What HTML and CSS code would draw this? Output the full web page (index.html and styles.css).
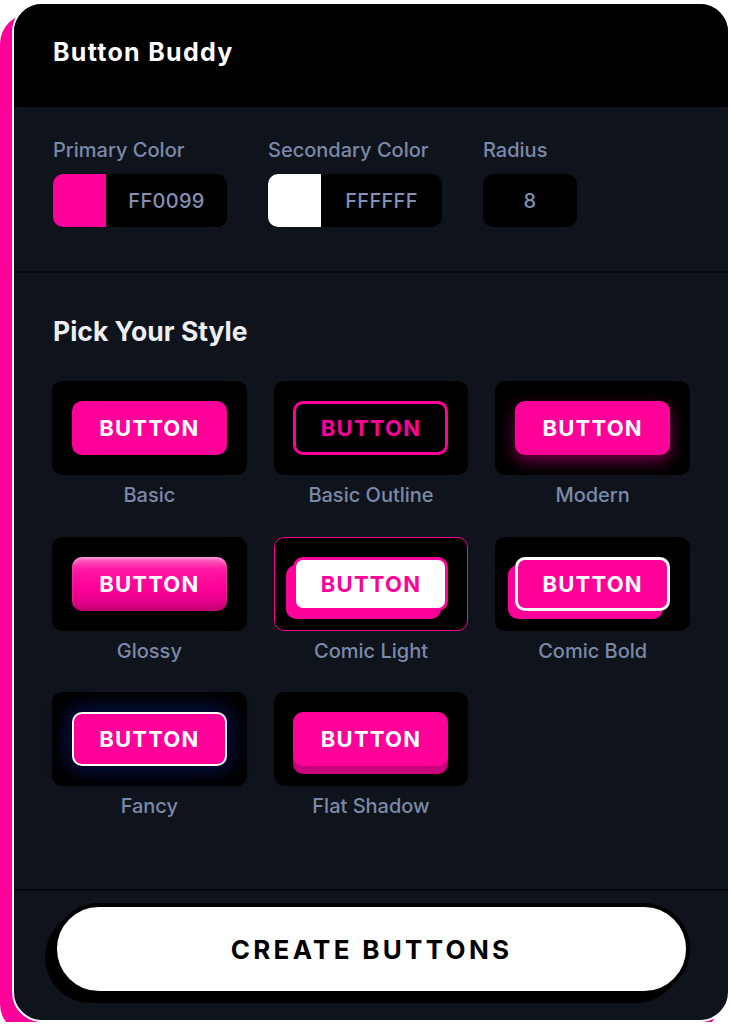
FILE: index.html
```html
<!DOCTYPE html>
<html lang="en">
<head>
<meta charset="utf-8">
<title>Button Buddy</title>
<link rel="stylesheet" href="styles.css">
</head>
<body>
<div class="page">
  <div class="card">
    <header class="header">
      <h1 class="title">Button Buddy</h1>
    </header>

    <section class="controls">
      <div class="field">
        <span class="label">Primary Color</span>
        <div class="color-input">
          <span class="swatch swatch-pink"></span>
          <span class="value">FF0099</span>
        </div>
      </div>
      <div class="field">
        <span class="label">Secondary Color</span>
        <div class="color-input">
          <span class="swatch swatch-white"></span>
          <span class="value">FFFFFF</span>
        </div>
      </div>
      <div class="field">
        <span class="label">Radius</span>
        <div class="radius-input">
          <span class="value">8</span>
        </div>
      </div>
    </section>

    <section class="styles">
      <h2 class="section-title">Pick Your Style</h2>
      <div class="style-grid">
        <div class="style-item">
          <div class="preview"><span class="btn btn-basic">BUTTON</span></div>
          <span class="style-name">Basic</span>
        </div>
        <div class="style-item">
          <div class="preview"><span class="btn btn-outline">BUTTON</span></div>
          <span class="style-name">Basic Outline</span>
        </div>
        <div class="style-item">
          <div class="preview"><span class="btn btn-modern">BUTTON</span></div>
          <span class="style-name">Modern</span>
        </div>
        <div class="style-item">
          <div class="preview"><span class="btn btn-glossy">BUTTON</span></div>
          <span class="style-name">Glossy</span>
        </div>
        <div class="style-item">
          <div class="preview preview-selected"><span class="btn btn-comic-light">BUTTON</span></div>
          <span class="style-name">Comic Light</span>
        </div>
        <div class="style-item">
          <div class="preview"><span class="btn btn-comic-bold">BUTTON</span></div>
          <span class="style-name">Comic Bold</span>
        </div>
        <div class="style-item">
          <div class="preview"><span class="btn btn-fancy">BUTTON</span></div>
          <span class="style-name">Fancy</span>
        </div>
        <div class="style-item">
          <div class="preview"><span class="btn btn-flat">BUTTON</span></div>
          <span class="style-name">Flat Shadow</span>
        </div>
      </div>
    </section>

    <footer class="footer">
      <button class="create" type="button">CREATE BUTTONS</button>
    </footer>
  </div>
</div>
</body>
</html>
```

FILE: styles.css
```css
* {
  box-sizing: border-box;
}

html, body {
  margin: 0;
  padding: 0;
  background: #ffffff;
}

body {
  font-family: Inter, "Noto Sans", "Liberation Sans", sans-serif;
  overflow: hidden;
}

.page {
  padding: 2px 0 0 12px;
}

.card {
  width: 718px;
  height: 1020px;
  background: #0f131b;
  border: 2px solid #ffffff;
  border-radius: 30px;
  box-shadow: -12px 12px 0 #ff0099;
  overflow: hidden;
  display: flex;
  flex-direction: column;
}

.header {
  background: #000000;
  height: 103px;
  padding: 33px 39px 0;
}

.title {
  margin: 0;
  font-size: 25px;
  line-height: 30px;
  font-weight: 700;
  color: #ffffff;
  letter-spacing: 1.3px;
}

.controls {
  display: flex;
  gap: 41px;
  padding: 31px 39px 44px;
  border-bottom: 2px solid #05070b;
}

.field {
  display: flex;
  flex-direction: column;
  gap: 12px;
}

.label {
  font-size: 20px;
  line-height: 24px;
  font-weight: 500;
  color: #7b89a8;
}

.color-input {
  display: flex;
  width: 174px;
  height: 53px;
  background: #000000;
  border-radius: 10px;
  overflow: hidden;
}

.swatch {
  width: 53px;
  flex: none;
}

.swatch-pink {
  background: #ff0099;
}

.swatch-white {
  background: #ffffff;
}

.value {
  flex: 1;
  display: flex;
  align-items: center;
  justify-content: center;
  font-size: 20px;
  font-weight: 500;
  color: #8391b2;
  letter-spacing: 0.3px;
}

.radius-input {
  display: flex;
  width: 94px;
  height: 53px;
  background: #000000;
  border-radius: 10px;
}

.styles {
  flex: 1;
  padding: 42px 38px 0;
  border-bottom: 2px solid #05070b;
}

.section-title {
  margin: 0 0 34px 1px;
  font-size: 26.5px;
  line-height: 32px;
  font-weight: 700;
  color: #eceef3;
}

.style-grid {
  display: grid;
  grid-template-columns: repeat(3, 1fr);
  column-gap: 27px;
  row-gap: 29.5px;
}

.style-item {
  display: flex;
  flex-direction: column;
  align-items: center;
  gap: 8px;
}

.preview {
  width: 100%;
  height: 94px;
  background: #000000;
  border-radius: 10px;
  display: flex;
  align-items: center;
  justify-content: center;
}

.preview-selected {
  border: 1.5px solid #ff0099;
}

.style-name {
  font-size: 20px;
  line-height: 24px;
  font-weight: 500;
  color: #7b89a8;
}

.btn {
  width: 155px;
  height: 54px;
  border-radius: 10px;
  display: flex;
  align-items: center;
  justify-content: center;
  font-size: 22px;
  font-weight: 700;
  letter-spacing: 1.2px;
  color: #ffffff;
  background: #ff0099;
}

.btn-outline {
  background: transparent;
  border: 3px solid #ff0099;
  color: #ff0099;
}

.btn-modern {
  box-shadow: 0 6px 16px rgba(255, 0, 153, 0.45);
}

.btn-glossy {
  background: linear-gradient(180deg, #ff6ac6 0%, #ff1aa3 22%, #ff0099 55%, #d3007e 100%);
  box-shadow: inset 0 2px 3px rgba(255, 255, 255, 0.35), inset 0 -3px 4px rgba(150, 0, 80, 0.35);
}

.btn-comic-light {
  background: #ffffff;
  color: #ff0099;
  border: 3px solid #ff0099;
  box-shadow: -7px 8px 0 #ff0099;
}

.btn-comic-bold {
  border: 3px solid #ffffff;
  box-shadow: -7px 8px 0 #ff0099;
}

.btn-fancy {
  border: 2px solid #ffffff;
  box-shadow: 0 0 20px 5px rgba(6, 20, 80, 0.9);
}

.btn-flat {
  box-shadow: 0 8px 0 #c8007b;
}

.footer {
  padding: 12px 38px 25px 39px;
}

.create {
  display: block;
  width: 100%;
  height: 92px;
  margin: 0;
  padding: 0;
  background: #ffffff;
  border: 4px solid #000000;
  border-radius: 46px;
  box-shadow: -8px 8px 0 #000000;
  font-family: Inter, "Noto Sans", "Liberation Sans", sans-serif;
  font-size: 26px;
  font-weight: 700;
  letter-spacing: 3.3px;
  color: #000000;
  cursor: pointer;
}
```
